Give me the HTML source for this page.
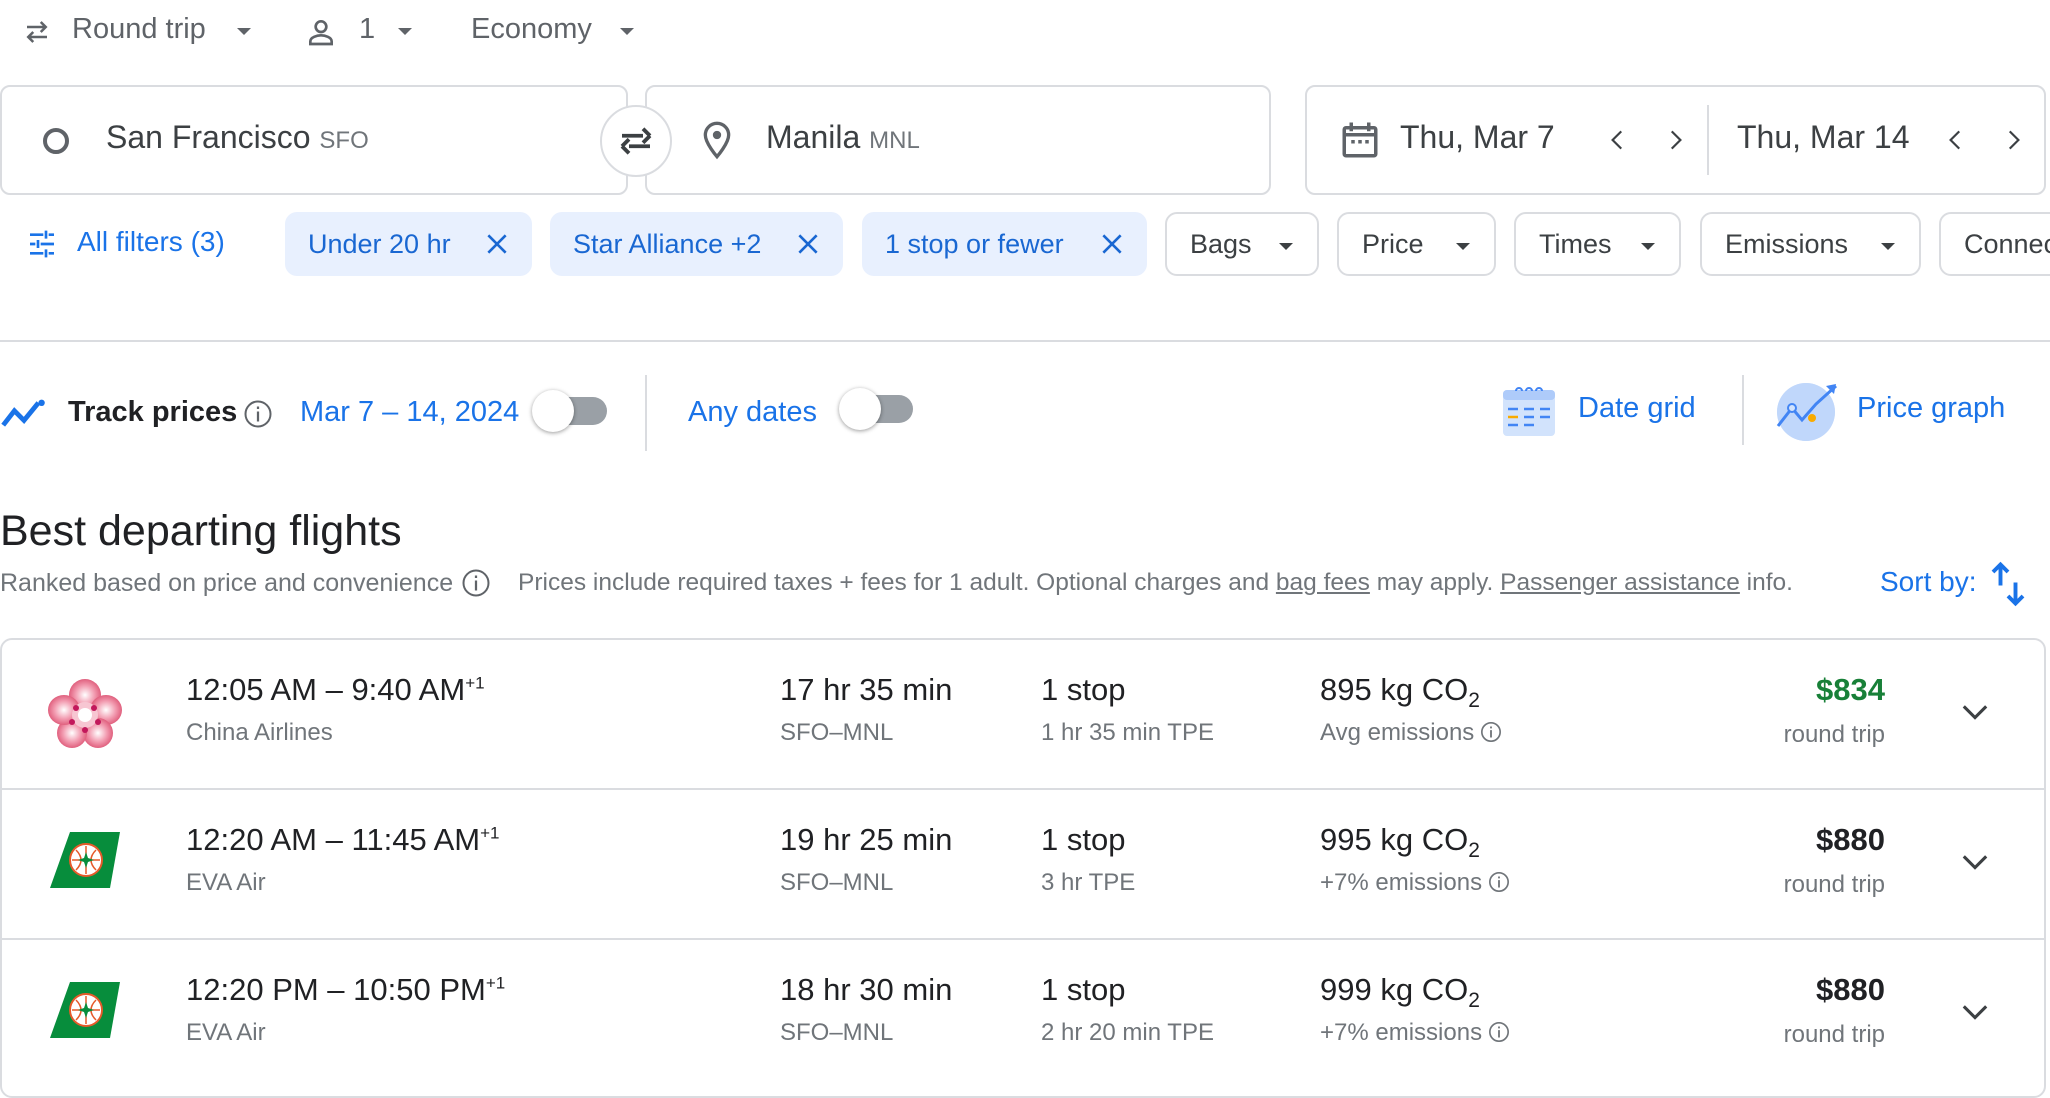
<!DOCTYPE html>
<html><head><meta charset="utf-8">
<style>
*{box-sizing:border-box;margin:0;padding:0}
body{width:2050px;height:1082px;overflow:hidden;background:#fff;font-family:"Liberation Sans",Arial,sans-serif;color:#202124;position:relative}
.a{position:absolute;white-space:nowrap}
.box{position:absolute;border:2px solid #dadce0;border-radius:10px;background:#fff}
.chip{position:absolute;top:212px;height:64px;border-radius:12px;font-size:27px;display:flex;align-items:center;padding-left:23px}
.sel{background:#e8f0fe;color:#1967d2}
.out{border:2px solid #dadce0;color:#3c4043}
.x{position:absolute;right:22px;top:19px}
.tri{position:absolute;right:24px;top:29px;width:0;height:0;border-left:7px solid transparent;border-right:7px solid transparent;border-top:7px solid #3c4043}
.blue{color:#1a73e8}
.t1{font-size:31px;color:#202124}
.t2{font-size:24px;color:#70757a;line-height:28px}
.row{position:absolute;left:0;width:2046px;height:150px;border-bottom:2px solid #dadce0}
.ii{display:inline-block;vertical-align:-3px;margin-left:6px}
</style></head><body>

<svg class="a" style="left:20px;top:17px" width="34" height="30" viewBox="0 0 24 24"><path d="M4 8h15M15 4l4 4-4 4M20 16H5M9 12l-4 4 4 4" fill="none" stroke="#5f6368" stroke-width="2"/></svg>
<div class="a" style="left:72px;top:13px;font-size:29px;color:#5f6368">Round trip</div>
<div class="a" style="left:237px;top:28px;border-left:7px solid transparent;border-right:7px solid transparent;border-top:7px solid #5f6368"></div>
<svg class="a" style="left:305px;top:15px" width="32" height="34" viewBox="0 0 24 24"><circle cx="12" cy="8" r="4" fill="none" stroke="#5f6368" stroke-width="2"/><path d="M4 21v-2c0-3 5-4.5 8-4.5s8 1.5 8 4.5v2z" fill="none" stroke="#5f6368" stroke-width="2"/></svg>
<div class="a" style="left:359px;top:13px;font-size:29px;color:#5f6368">1</div>
<div class="a" style="left:398px;top:28px;border-left:7px solid transparent;border-right:7px solid transparent;border-top:7px solid #5f6368"></div>
<div class="a" style="left:471px;top:13px;font-size:29px;color:#5f6368">Economy</div>
<div class="a" style="left:620px;top:28px;border-left:7px solid transparent;border-right:7px solid transparent;border-top:7px solid #5f6368"></div>

<div class="box" style="left:0;top:85px;width:628px;height:110px"></div>
<div class="box" style="left:645px;top:85px;width:626px;height:110px"></div>
<div class="a" style="left:600px;top:105px;width:72px;height:72px;border-radius:50%;border:2px solid #dadce0;background:#fff"></div>
<svg class="a" style="left:615px;top:120px" width="42" height="42" viewBox="0 0 24 24"><path d="M8 15h12M4 15l4-4M4 15l4 4M16 9H4M20 9l-4-4M20 9l-4 4" fill="none" stroke="#3c4043" stroke-width="2.2"/></svg>
<div class="a" style="left:43px;top:128px;width:26px;height:26px;border-radius:50%;border:4px solid #5f6368"></div>
<div class="a" style="left:106px;top:119px;font-size:32px;color:#3c4043">San Francisco <span style="font-size:24px;color:#70757a">SFO</span></div>
<svg class="a" style="left:697px;top:118px" width="40" height="44" viewBox="0 0 24 24"><path d="M12 2a7 7 0 0 0-7 7c0 5 7 13 7 13s7-8 7-13a7 7 0 0 0-7-7z" fill="none" stroke="#5f6368" stroke-width="2"/><circle cx="12" cy="9" r="2.5" fill="#5f6368"/></svg>
<div class="a" style="left:766px;top:119px;font-size:32px;color:#3c4043">Manila <span style="font-size:24px;color:#70757a">MNL</span></div>

<div class="box" style="left:1305px;top:85px;width:741px;height:110px"></div>
<svg class="a" style="left:1339px;top:117px" width="42" height="46" viewBox="0 0 24 24"><rect x="3" y="5" width="18" height="16" rx="1" fill="none" stroke="#5f6368" stroke-width="2"/><path d="M3 9h18M7 2v5M17 2v5" stroke="#5f6368" stroke-width="2"/><path d="M7 13h2M11 13h2M15 13h2" stroke="#5f6368" stroke-width="2"/></svg>
<div class="a" style="left:1400px;top:119px;font-size:32px;color:#3c4043">Thu, Mar 7</div>
<svg class="a" style="left:1605px;top:125px" width="26" height="30" viewBox="0 0 24 24"><path d="M15 4l-8 8 8 8" fill="none" stroke="#3c4043" stroke-width="2"/></svg>
<svg class="a" style="left:1662px;top:125px" width="26" height="30" viewBox="0 0 24 24"><path d="M9 4l8 8-8 8" fill="none" stroke="#3c4043" stroke-width="2"/></svg>
<div class="a" style="left:1707px;top:105px;width:2px;height:70px;background:#dadce0"></div>
<div class="a" style="left:1737px;top:119px;font-size:32px;color:#3c4043">Thu, Mar 14</div>
<svg class="a" style="left:1943px;top:125px" width="26" height="30" viewBox="0 0 24 24"><path d="M15 4l-8 8 8 8" fill="none" stroke="#3c4043" stroke-width="2"/></svg>
<svg class="a" style="left:2000px;top:125px" width="26" height="30" viewBox="0 0 24 24"><path d="M9 4l8 8-8 8" fill="none" stroke="#3c4043" stroke-width="2"/></svg>

<svg class="a" style="left:26px;top:228px" width="32" height="32" viewBox="0 0 24 24"><path d="M3 5h10M17 5h4M15 2v6M3 12h4M11 12h10M9 9v6M3 19h10M17 19h4M15 16v6" stroke="#1a73e8" stroke-width="2"/></svg>
<div class="a blue" style="left:77px;top:226px;font-size:28px">All filters (3)</div>
<div class="chip sel" style="left:285px;width:247px">Under 20 hr<svg class="x" width="26" height="26" viewBox="0 0 24 24"><path d="M4 4l16 16M20 4L4 20" stroke="#1967d2" stroke-width="2.4"/></svg></div>
<div class="chip sel" style="left:550px;width:293px">Star Alliance +2<svg class="x" width="26" height="26" viewBox="0 0 24 24"><path d="M4 4l16 16M20 4L4 20" stroke="#1967d2" stroke-width="2.4"/></svg></div>
<div class="chip sel" style="left:862px;width:285px">1 stop or fewer<svg class="x" width="26" height="26" viewBox="0 0 24 24"><path d="M4 4l16 16M20 4L4 20" stroke="#1967d2" stroke-width="2.4"/></svg></div>
<div class="chip out" style="left:1165px;width:154px">Bags<div class="tri"></div></div>
<div class="chip out" style="left:1337px;width:159px">Price<div class="tri"></div></div>
<div class="chip out" style="left:1514px;width:167px">Times<div class="tri"></div></div>
<div class="chip out" style="left:1700px;width:221px">Emissions<div class="tri"></div></div>
<div class="chip out" style="left:1939px;width:140px">Connecting</div>

<div class="a" style="left:0;top:340px;width:2050px;height:2px;background:#dadce0"></div>

<svg class="a" style="left:0;top:398px" width="48" height="32" viewBox="0 0 30 20"><path d="M2 17l7-9 6 6 9-11" fill="none" stroke="#1a73e8" stroke-width="3"/><circle cx="26" cy="3" r="2" fill="#1a73e8"/></svg>
<div class="a" style="left:68px;top:396px;font-size:29px;font-weight:bold;color:#202124">Track prices</div>
<svg class="a" style="left:243px;top:399px" width="30" height="30" viewBox="0 0 24 24"><circle cx="12" cy="12" r="10" fill="none" stroke="#5f6368" stroke-width="1.6"/><path d="M12 10v8M12 6v2" stroke="#5f6368" stroke-width="1.8"/></svg>
<div class="a blue" style="left:300px;top:396px;font-size:29px">Mar 7 – 14, 2024</div>
<div class="a" style="left:537px;top:397px;width:70px;height:28px;border-radius:14px;background:#9aa0a6"></div>
<div class="a" style="left:532px;top:390px;width:42px;height:42px;border-radius:50%;background:#fff;box-shadow:0 1px 4px rgba(0,0,0,.4)"></div>
<div class="a" style="left:645px;top:375px;width:2px;height:76px;background:#dadce0"></div>
<div class="a blue" style="left:688px;top:396px;font-size:29px">Any dates</div>
<div class="a" style="left:843px;top:395px;width:70px;height:28px;border-radius:14px;background:#9aa0a6"></div>
<div class="a" style="left:839px;top:388px;width:42px;height:42px;border-radius:50%;background:#fff;box-shadow:0 1px 4px rgba(0,0,0,.4)"></div>

<svg class="a" style="left:1502px;top:382px" width="54" height="56" viewBox="0 0 54 56"><rect x="1" y="8" width="52" height="46" rx="4" fill="#d2e3fc"/><rect x="1" y="8" width="52" height="10" rx="4" fill="#aecbfa"/><path d="M14 9a3 3 0 1 1 6 0M24 9a3 3 0 1 1 6 0M34 9a3 3 0 1 1 6 0" fill="none" stroke="#4285f4" stroke-width="2"/><path d="M6 27h10M22 27h10M38 27h10M22 35h10M38 35h10M6 43h10M22 43h10" stroke="#4285f4" stroke-width="2.5"/><path d="M6 35h10" stroke="#f9ab00" stroke-width="2.5"/></svg>
<div class="a blue" style="left:1578px;top:392px;font-size:29px">Date grid</div>
<div class="a" style="left:1742px;top:375px;width:2px;height:70px;background:#dadce0"></div>
<svg class="a" style="left:1776px;top:380px" width="64" height="62" viewBox="0 0 64 62"><circle cx="30" cy="32" r="29" fill="#aecbfa"/><circle cx="30" cy="32" r="29" fill="#d2e3fc" opacity=".5"/><path d="M2 46l14-18 10 12 14-16 20-18" fill="none" stroke="#4285f4" stroke-width="3"/><path d="M50 6l10-2-2 10z" fill="#4285f4"/><circle cx="16" cy="28" r="4" fill="#d2e3fc" stroke="#4285f4" stroke-width="2"/><circle cx="36" cy="38" r="4" fill="#f9ab00"/></svg>
<div class="a blue" style="left:1857px;top:392px;font-size:29px">Price graph</div>

<div class="a" style="left:0;top:507px;font-size:43px;color:#202124">Best departing flights</div>
<div class="a" style="left:0;top:569px;font-size:25px;color:#70757a">Ranked based on price and convenience</div>
<svg class="a" style="left:461px;top:568px" width="30" height="30" viewBox="0 0 24 24"><circle cx="12" cy="12" r="10" fill="none" stroke="#5f6368" stroke-width="1.6"/><path d="M12 10v8M12 6v2" stroke="#5f6368" stroke-width="1.8"/></svg>
<div class="a" style="left:518px;top:569px;font-size:24.5px;color:#70757a">Prices include required taxes + fees for 1 adult. Optional charges and <u>bag fees</u> may apply. <u>Passenger assistance</u> info.</div>
<div class="a blue" style="left:1880px;top:566px;font-size:28px">Sort by:</div>
<svg class="a" style="left:1990px;top:561px" width="36" height="46" viewBox="0 0 24 30"><path d="M7 16V2M2 7l5-5 5 5M17 14v14M12 23l5 5 5-5" fill="none" stroke="#1a73e8" stroke-width="2.6"/></svg>

<div class="a" style="left:0;top:638px;width:2046px;height:460px;border:2px solid #dadce0;border-radius:12px"></div>
<div class="row" style="top:638px;height:152px"></div>
<div class="row" style="top:788px;height:152px"></div>

<svg class="a" style="left:48px;top:678px" width="74" height="72" viewBox="0 0 74 72"><defs><radialGradient id="g"><stop offset="0" stop-color="#fff"/><stop offset=".6" stop-color="#f29bb0"/><stop offset="1" stop-color="#e0607e"/></radialGradient></defs><g fill="url(#g)"><ellipse cx="37" cy="17" rx="16" ry="16"/><ellipse cx="58" cy="32" rx="16" ry="15"/><ellipse cx="50" cy="55" rx="15" ry="15"/><ellipse cx="24" cy="55" rx="15" ry="15"/><ellipse cx="16" cy="32" rx="16" ry="15"/></g><circle cx="37" cy="37" r="13" fill="#f7c6d2"/><circle cx="37" cy="37" r="7" fill="#fff"/><g fill="#c2185b"><circle cx="28" cy="30" r="3"/><circle cx="46" cy="30" r="3"/><circle cx="24" cy="44" r="3"/><circle cx="50" cy="44" r="3"/><circle cx="37" cy="52" r="3"/></g></svg>
<div class="a t1" style="left:186px;top:672px">12:05 AM – 9:40 AM<sup style="font-size:17px">+1</sup></div>
<div class="a t2" style="left:186px;top:719px">China Airlines</div>
<div class="a t1" style="left:780px;top:672px">17 hr 35 min</div>
<div class="a t2" style="left:780px;top:719px">SFO–MNL</div>
<div class="a t1" style="left:1041px;top:672px">1 stop</div>
<div class="a t2" style="left:1041px;top:719px">1 hr 35 min TPE</div>
<div class="a t1" style="left:1320px;top:672px">895 kg CO<sub style="font-size:21px">2</sub></div>
<div class="a t2" style="left:1320px;top:719px">Avg emissions<svg class="ii" width="22" height="22" viewBox="0 0 24 24"><circle cx="12" cy="12" r="10" fill="none" stroke="#70757a" stroke-width="1.8"/><path d="M12 10v8M12 6v2" stroke="#70757a" stroke-width="2"/></svg></div>
<div class="a" style="right:165px;top:672px;font-size:31px;font-weight:bold;color:#188038">$834</div>
<div class="a t2" style="right:165px;top:721px">round trip</div>
<svg class="a" style="left:1958px;top:698px" width="34" height="28" viewBox="0 0 24 20"><path d="M4 6l8 8 8-8" fill="none" stroke="#3c4043" stroke-width="2.2"/></svg>

<svg class="a" style="left:50px;top:832px" width="70" height="56" viewBox="0 0 70 56"><path d="M20 0h50l-10 56H0z" fill="#078d3c"/><circle cx="36" cy="28" r="16" fill="#fff" stroke="#e65a2a" stroke-width="2"/><path d="M36 14v28M22 28h28M26 18q10 10 0 20M46 18q-10 10 0 20" fill="none" stroke="#e65a2a" stroke-width="1.5"/><path d="M36 20l2 6 6 2-6 2-2 6-2-6-6-2 6-2z" fill="#078d3c"/></svg>
<div class="a t1" style="left:186px;top:822px">12:20 AM – 11:45 AM<sup style="font-size:17px">+1</sup></div>
<div class="a t2" style="left:186px;top:869px">EVA Air</div>
<div class="a t1" style="left:780px;top:822px">19 hr 25 min</div>
<div class="a t2" style="left:780px;top:869px">SFO–MNL</div>
<div class="a t1" style="left:1041px;top:822px">1 stop</div>
<div class="a t2" style="left:1041px;top:869px">3 hr TPE</div>
<div class="a t1" style="left:1320px;top:822px">995 kg CO<sub style="font-size:21px">2</sub></div>
<div class="a t2" style="left:1320px;top:869px">+7% emissions<svg class="ii" width="22" height="22" viewBox="0 0 24 24"><circle cx="12" cy="12" r="10" fill="none" stroke="#70757a" stroke-width="1.8"/><path d="M12 10v8M12 6v2" stroke="#70757a" stroke-width="2"/></svg></div>
<div class="a" style="right:165px;top:822px;font-size:31px;font-weight:bold;color:#202124">$880</div>
<div class="a t2" style="right:165px;top:871px">round trip</div>
<svg class="a" style="left:1958px;top:848px" width="34" height="28" viewBox="0 0 24 20"><path d="M4 6l8 8 8-8" fill="none" stroke="#3c4043" stroke-width="2.2"/></svg>

<svg class="a" style="left:50px;top:982px" width="70" height="56" viewBox="0 0 70 56"><path d="M20 0h50l-10 56H0z" fill="#078d3c"/><circle cx="36" cy="28" r="16" fill="#fff" stroke="#e65a2a" stroke-width="2"/><path d="M36 14v28M22 28h28M26 18q10 10 0 20M46 18q-10 10 0 20" fill="none" stroke="#e65a2a" stroke-width="1.5"/><path d="M36 20l2 6 6 2-6 2-2 6-2-6-6-2 6-2z" fill="#078d3c"/></svg>
<div class="a t1" style="left:186px;top:972px">12:20 PM – 10:50 PM<sup style="font-size:17px">+1</sup></div>
<div class="a t2" style="left:186px;top:1019px">EVA Air</div>
<div class="a t1" style="left:780px;top:972px">18 hr 30 min</div>
<div class="a t2" style="left:780px;top:1019px">SFO–MNL</div>
<div class="a t1" style="left:1041px;top:972px">1 stop</div>
<div class="a t2" style="left:1041px;top:1019px">2 hr 20 min TPE</div>
<div class="a t1" style="left:1320px;top:972px">999 kg CO<sub style="font-size:21px">2</sub></div>
<div class="a t2" style="left:1320px;top:1019px">+7% emissions<svg class="ii" width="22" height="22" viewBox="0 0 24 24"><circle cx="12" cy="12" r="10" fill="none" stroke="#70757a" stroke-width="1.8"/><path d="M12 10v8M12 6v2" stroke="#70757a" stroke-width="2"/></svg></div>
<div class="a" style="right:165px;top:972px;font-size:31px;font-weight:bold;color:#202124">$880</div>
<div class="a t2" style="right:165px;top:1021px">round trip</div>
<svg class="a" style="left:1958px;top:998px" width="34" height="28" viewBox="0 0 24 20"><path d="M4 6l8 8 8-8" fill="none" stroke="#3c4043" stroke-width="2.2"/></svg>

</body></html>
